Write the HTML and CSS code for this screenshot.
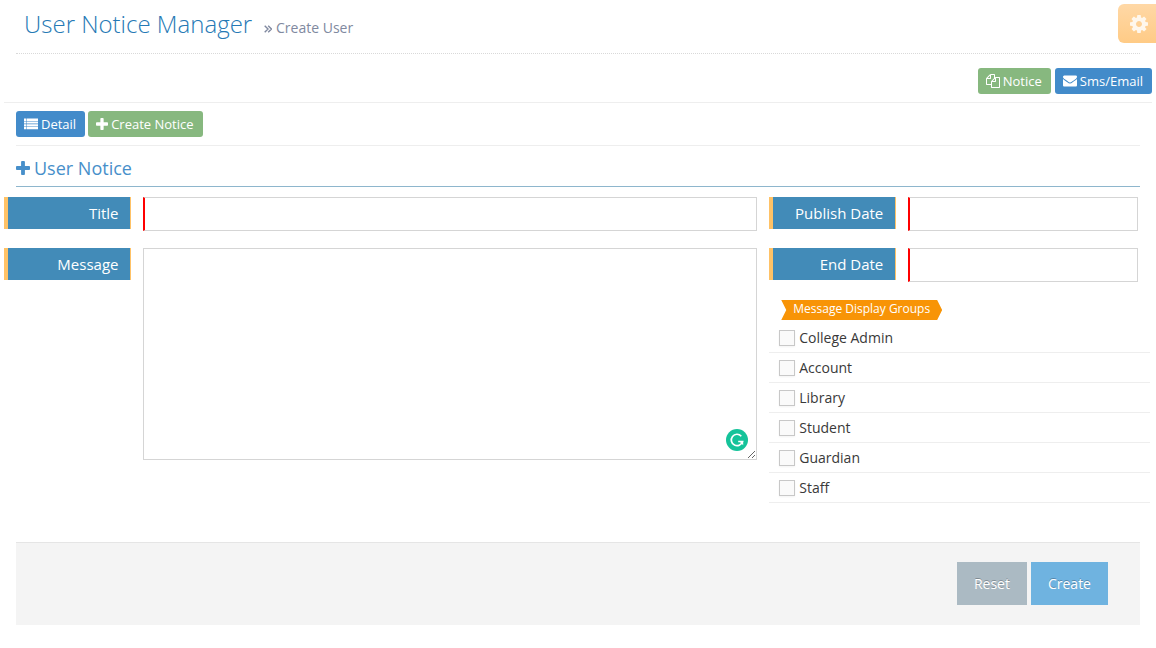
FILE: index.html
```html
<!DOCTYPE html>
<html lang="en">
<head>
    <meta charset="UTF-8">
    <meta name="viewport" content="width=device-width, initial-scale=1.0">
    <title>User Notice Manager</title>
    <link rel="stylesheet" href="styles.css">
</head>
<body>
    <!-- Icons -->
    <svg class="icon-defs" width="0" height="0" aria-hidden="true">
        <symbol id="icon-plus" viewBox="192 128 1408 1408"><path d="M1600 736v192q0 40-28 68t-68 28h-416v416q0 40-28 68t-68 28h-192q-40 0-68-28t-28-68v-416h-416q-40 0-68-28t-28-68v-192q0-40 28-68t68-28h416v-416q0-40 28-68t68-28h192q40 0 68 28t28 68v416h416q40 0 68 28t28 68z"/></symbol>
        <symbol id="icon-cog" viewBox="128 128 1536 1536"><path d="M1152 896q0-106-75-181t-181-75-181 75-75 181 75 181 181 75 181-75 75-181zm512-109v222q0 12-8 23t-20 13l-185 28q-19 54-39 91 35 50 107 138 10 12 10 25t-9 23q-27 37-99 108t-94 71q-12 0-26-9l-138-108q-44 23-91 38-16 136-29 186-7 28-36 28h-222q-14 0-24.500-8.500t-11.500-21.500l-28-184q-49-16-90-37l-141 107q-10 9-25 9-14 0-25-11-126-114-165-168-7-10-7-23 0-12 8-23 15-21 51-66.500t54-70.500q-27-50-41-99l-183-27q-13-2-21-12.500t-8-23.500v-222q0-12 8-23t19-13l186-28q14-46 39-92-40-57-107-138-10-12-10-24 0-10 9-23 26-36 98.500-107.500t94.500-71.500q13 0 26 10l138 107q44-23 91-38 16-136 29-186 7-28 36-28h222q14 0 24.500 8.500t11.500 21.500l28 184q49 16 90 37l142-107q9-9 24-9 13 0 25 10 129 119 165 170 7 8 7 22 0 12-8 23-15 21-51 66.500t-54 70.500q26 50 41 98l183 28q13 2 21 12.500t8 23.500z"/></symbol>
        <symbol id="icon-envelope" viewBox="0 128 1792 1664"><path d="M1792 710v794q0 66-47 113t-113 47h-1472q-66 0-113-47t-47-113v-794q44 49 101 87 362 246 497 345 57 42 92.500 65.500t94.500 48 110 24.500h2q51 0 110-24.500t94.500-48 92.500-65.500q170-123 498-345 57-39 100-87zm0-294q0 79-49 151t-122 123q-376 261-468 325-10 7-42.500 31t-54 38.500-52 32.500-57.500 27-50 9h-2q-23 0-50-9t-57.500-27-52-32.500-54-38.500-42.500-31q-91-64-262-182.500t-205-142.500q-62-42-117-115.500t-55-136.500q0-78 41.500-130t118.500-52h1472q65 0 112.500 47t47.500 113z"/></symbol>
        <symbol id="icon-files" viewBox="0 0 1792 1792"><path d="M1696 384q40 0 68 28t28 68v1216q0 40-28 68t-68 28h-960q-40 0-68-28t-28-68v-288h-544q-40 0-68-28t-28-68v-672q0-40 20-88t48-76l408-408q28-28 76-48t88-20h416q40 0 68 28t28 68v328q68-40 128-40h416zm-544 213l-299 299h299v-299zm-640-384l-299 299h299v-299zm196 647l316-316v-416h-384v416q0 40-28 68t-68 28h-416v640h512v-256q0-40 20-88t48-76zm956 804v-1152h-384v416q0 40-28 68t-68 28h-416v640h896z"/></symbol>
        <symbol id="icon-list" viewBox="0 0 14 12"><path d="M0 .5h2v2.400H0zM2.500 .5H14v2.400H2.500zM0 3.400h2v2.200H0zM2.500 3.400H14v2.200H2.500zM0 6.200h2v2.200H0zM2.500 6.200H14v2.200H2.500zM0 9h2v2.200H0zM2.500 9H14v2.200H2.500z"/></symbol>
        <symbol id="icon-angles" viewBox="0 0 8 8"><path d="M.7.700L4 4 .7 7.300M4.200.700L7.500 4 4.200 7.300" fill="none" stroke="currentColor" stroke-width="1.400"/></symbol>
    </svg>

    <div class="page-content">
        <button type="button" class="settings-btn" aria-label="Settings">
            <svg class="icon"><use href="#icon-cog"/></svg>
        </button>

        <div class="page-header">
            <h1>User Notice Manager
                <small><svg class="icon"><use href="#icon-angles"/></svg> Create User</small>
            </h1>
        </div>

        <div class="top-actions">
            <a href="#" class="btn-sm btn-success"><svg class="icon"><use href="#icon-files"/></svg>Notice</a>
            <a href="#" class="btn-sm btn-primary"><svg class="icon"><use href="#icon-envelope"/></svg>Sms/Email</a>
        </div>

        <div class="sub-actions">
            <a href="#" class="btn-sm btn-primary"><svg class="icon"><use href="#icon-list"/></svg>Detail</a>
            <a href="#" class="btn-sm btn-success"><svg class="icon icon-plus"><use href="#icon-plus"/></svg>Create Notice</a>
        </div>

        <h4 class="header"><svg class="icon"><use href="#icon-plus"/></svg>User Notice</h4>

        <form action="#">
            <div class="form-row">
                <div class="col-main">
                    <div class="form-group">
                        <label class="control-label" for="title">Title</label>
                        <div class="control"><input type="text" id="title" class="form-control" required></div>
                    </div>
                    <div class="form-group">
                        <label class="control-label" for="message">Message</label>
                        <div class="control">
                            <textarea id="message" class="form-control"></textarea>
                            <!-- writing assistant badge -->
                            <svg class="assist-badge" viewBox="0 0 22 22" aria-hidden="true">
                                <circle cx="11" cy="11" r="11" fill="#15c39a"/>
                                <path d="M15.300 7.200A5.700 5.700 0 1 0 16.500 12.500H12.200" fill="none" stroke="#fff" stroke-width="1.700"/>
                                <path d="M13 12h4.200v4.300z" fill="#fff"/>
                            </svg>
                        </div>
                    </div>
                </div>

                <div class="col-side">
                    <div class="form-group">
                        <label class="control-label" for="publish-date">Publish Date</label>
                        <div class="control"><input type="text" id="publish-date" class="form-control" required></div>
                    </div>
                    <div class="form-group">
                        <label class="control-label" for="end-date">End Date</label>
                        <div class="control"><input type="text" id="end-date" class="form-control" required></div>
                    </div>

                    <span class="ribbon">Message Display Groups</span>
                    <ul class="groups">
                        <li><label><input type="checkbox" name="group"> College Admin</label></li>
                        <li><label><input type="checkbox" name="group"> Account</label></li>
                        <li><label><input type="checkbox" name="group"> Library</label></li>
                        <li><label><input type="checkbox" name="group"> Student</label></li>
                        <li><label><input type="checkbox" name="group"> Guardian</label></li>
                        <li><label><input type="checkbox" name="group"> Staff</label></li>
                    </ul>
                </div>
            </div>

            <div class="form-actions">
                <button type="reset" class="btn btn-reset">Reset</button>
                <button type="submit" class="btn btn-create">Create</button>
            </div>
        </form>
    </div>
</body>
</html>
```

FILE: styles.css
```css
* {
    box-sizing: border-box;
}
body {
    margin: 0;
    background: #fff;
    color: #393939;
    font-family: "Open Sans", sans-serif;
    font-size: 14px;
    line-height: 20px;
}
.icon-defs {
    position: absolute;
}
.icon {
    width: 14px;
    height: 14px;
    fill: currentColor;
    flex: none;
}
.page-content {
    position: relative;
    padding: 8px 16px 24px;
}

/* Header */
.page-header {
    padding: 0 8px 9px;
    border-bottom: 1px dotted #d9d9d9;
}
h1 {
    margin: 0;
    color: #2679b5;
    font-size: 24px;
    font-weight: 300;
    line-height: 32px;
}
h1 small {
    padding-left: 6px;
    color: #8089a0;
    font-size: 14px;
    font-weight: 400;
}
h1 .icon {
    width: 8px;
    height: 8px;
}
.settings-btn {
    position: absolute;
    top: 4px;
    right: 0;
    display: flex;
    align-items: center;
    justify-content: center;
    width: 38px;
    height: 39px;
    padding: 0 0 0 4px;
    border: 0;
    border-radius: 6px 0 0 6px;
    background: linear-gradient(#ffd8a6, #ffcb86);
    color: #fff7ec;
    cursor: pointer;
}
.settings-btn .icon {
    width: 18px;
    height: 18px;
}

/* Buttons */
.btn-sm {
    display: inline-flex;
    align-items: center;
    gap: 3px;
    height: 26px;
    padding: 0 9px 0 8px;
    border-radius: 3px;
    color: #fff;
    font-size: 13px;
    text-decoration: none;
}
.btn-sm .icon-plus {
    width: 12px;
    height: 12px;
}
.btn-primary {
    background: #428bca;
}
.btn-success {
    background: #87b87f;
}
.top-actions {
    display: flex;
    justify-content: flex-end;
    gap: 4px;
    margin: 0 -12px;
    padding: 14px 0 8px;
    border-bottom: 1px solid #eee;
}
.sub-actions {
    display: flex;
    gap: 3px;
    padding: 8px 0;
    border-bottom: 1px solid #eee;
}
.header {
    display: flex;
    align-items: center;
    gap: 4px;
    margin: 0 0 10px;
    padding: 8px 0 4px;
    border-bottom: 1px solid #8eb6cd;
    color: #478fca;
    font-size: 18px;
    font-weight: 400;
    line-height: 28px;
}

/* Form */
.form-row {
    display: flex;
    margin: 0 -12px;
}
.col-main {
    width: 66.66%;
}
.col-side {
    width: 33.2%;
}
.form-group {
    display: flex;
    align-items: flex-start;
    margin-bottom: 17px;
}
.control-label {
    flex: none;
    height: 32px;
    padding: 6px 12px 6px 0;
    border-left: 4px solid #ffc266;
    border-right: 1px solid #ffc266;
    background: #428bb8;
    color: #fff;
    font-size: 15px;
    text-align: right;
}
.col-main .control-label {
    width: 16.66%;
}
.col-side .control-label {
    width: 33.33%;
}
.control {
    position: relative;
    flex: 1;
    min-width: 0;
    padding: 0 12px;
}
.form-control {
    display: block;
    width: 100%;
    height: 34px;
    padding: 6px 4px;
    border: 1px solid #d5d5d5;
    border-radius: 0;
    background: #fff;
    color: #858585;
    font: inherit;
}
.form-control:required {
    border-left: 2px solid #f00;
    box-shadow: none;
}
.form-control:focus {
    outline: none;
    border-color: #f59942;
}
textarea.form-control {
    height: 212px;
    resize: vertical;
}
.assist-badge {
    position: absolute;
    right: 21px;
    bottom: 9px;
    width: 22px;
    height: 22px;
}
.ribbon {
    display: table;
    margin: 18px 0 3px 12px;
    padding: 0 12px 2px;
    background: #f89406;
    color: #fff;
    font-size: 12px;
    line-height: 18px;
    clip-path: polygon(0 0, calc(100% - 5px) 0, 100% 50%, calc(100% - 5px) 100%, 0 100%, 5px 50%);
}
.groups {
    margin: 0;
    padding: 0;
    list-style: none;
}
.groups li {
    border-bottom: 1px solid #eee;
}
.groups label {
    display: flex;
    align-items: center;
    gap: 4px;
    height: 29px;
    padding-left: 10px;
}
.groups input {
    appearance: none;
    width: 16px;
    height: 16px;
    margin: 0;
    border: 1px solid #c8c8c8;
    background: #fafafa;
    box-shadow: 0 1px 2px rgba(0, 0, 0, 0.05);
}
.groups input:checked {
    background: #428bca;
}

/* Footer */
.form-actions {
    display: flex;
    justify-content: flex-end;
    gap: 4px;
    margin-top: 39px;
    padding: 19px 32px 20px;
    border-top: 1px solid #e5e5e5;
    background: #f4f4f4;
}
.btn {
    height: 43px;
    padding: 0 17px;
    border: 0;
    color: #fff;
    font: inherit;
    text-shadow: 0 -1px 0 rgba(0, 0, 0, 0.25);
    cursor: pointer;
}
.btn-reset {
    background: #abbac3;
}
.btn-create {
    background: #6fb3e0;
}
```
